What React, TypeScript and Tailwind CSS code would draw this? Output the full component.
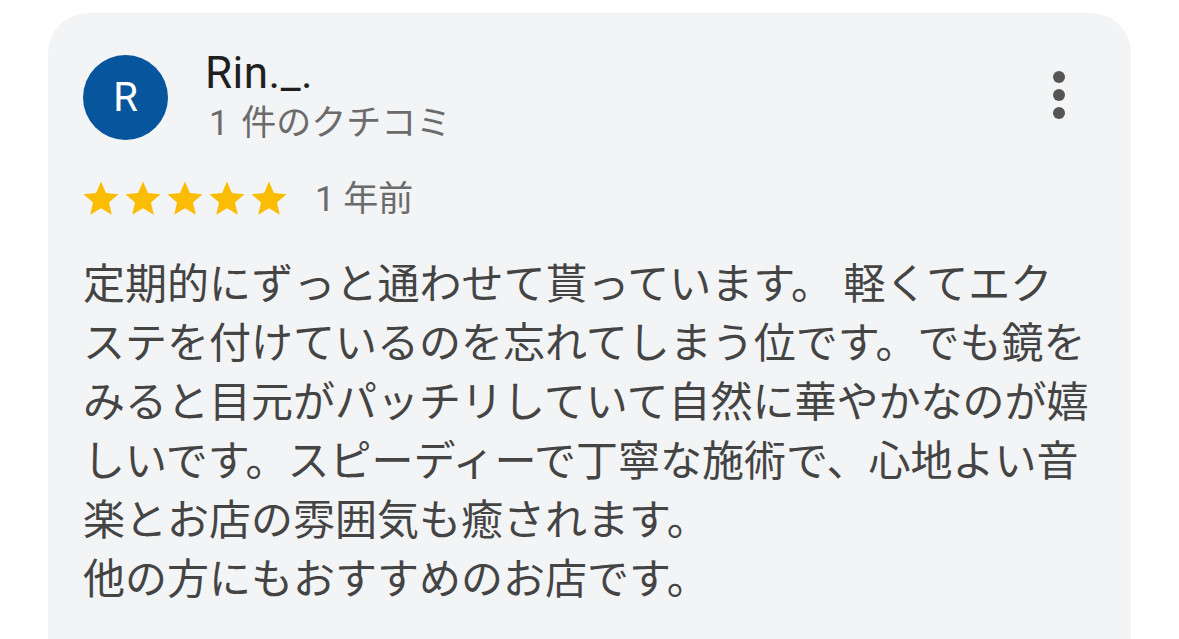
import React from "react";

const Star: React.FC = () => (
  <svg viewBox="0 0 24 24" className="h-[42px] w-[42px] shrink-0">
    <path
      fill="#fbbc04"
      d="M12 17.27L18.18 21l-1.64-7.03L22 9.24l-7.19-.61L12 2 9.19 8.63 2 9.24l5.46 4.73L5.82 21z"
    />
  </svg>
);

const ReviewCard: React.FC = () => {
  return (
    <div className="h-[700px] w-[1083px] rounded-[40px] bg-[#f3f4f6] pl-[35px] pr-[36px] pt-[42px]">
      {/* Header */}
      <div className="flex items-start">
        <div className="flex h-[85px] w-[85px] shrink-0 items-center justify-center rounded-full bg-[#07559c] text-[40px] leading-none text-white">
          R
        </div>
        <div className="ml-[37px] flex-1">
          <div className="text-[44px] leading-[36px] tracking-[0.5px] text-[#1f1f1f]">Rin._.</div>
          <div className="ml-[4px] mt-[11px] text-[35px] leading-[44px] text-[#6b6b6b] [word-spacing:4px]">
            1 件のクチコミ
          </div>
        </div>
        <button className="mr-[30px] mt-[16px]">
          <svg width="12" height="48" viewBox="0 0 12 48">
            <circle cx="6" cy="6" r="6" fill="#555555" />
            <circle cx="6" cy="24" r="6" fill="#555555" />
            <circle cx="6" cy="42" r="6" fill="#555555" />
          </svg>
        </button>
      </div>

      {/* Rating */}
      <div className="ml-[-3px] mt-[30px] flex items-center">
        <Star />
        <Star />
        <Star />
        <Star />
        <Star />
        <span className="ml-[25px] mt-[3px] text-[35px] leading-[42px] text-[#6b6b6b]">1 年前</span>
      </div>

      {/* Body */}
      <p className="mt-[34px] text-[42px] leading-[59px] text-[#444444]">
        定期的にずっと通わせて貰っています。 軽くてエク
        <br />
        ステを付けているのを忘れてしまう位です。でも鏡を
        <br />
        みると目元がパッチリしていて自然に華やかなのが嬉
        <br />
        しいです。スピーディーで丁寧な施術で、心地よい音
        <br />
        楽とお店の雰囲気も癒されます。
        <br />
        他の方にもおすすめのお店です。
      </p>
    </div>
  );
};

export default function App() {
  return (
    <div
      className="h-[639px] overflow-hidden bg-white pl-[48px] pt-[13px]"
      style={{ fontFamily: 'Roboto, "Noto Sans CJK JP", sans-serif' }}
    >
      <ReviewCard />
    </div>
  );
}
